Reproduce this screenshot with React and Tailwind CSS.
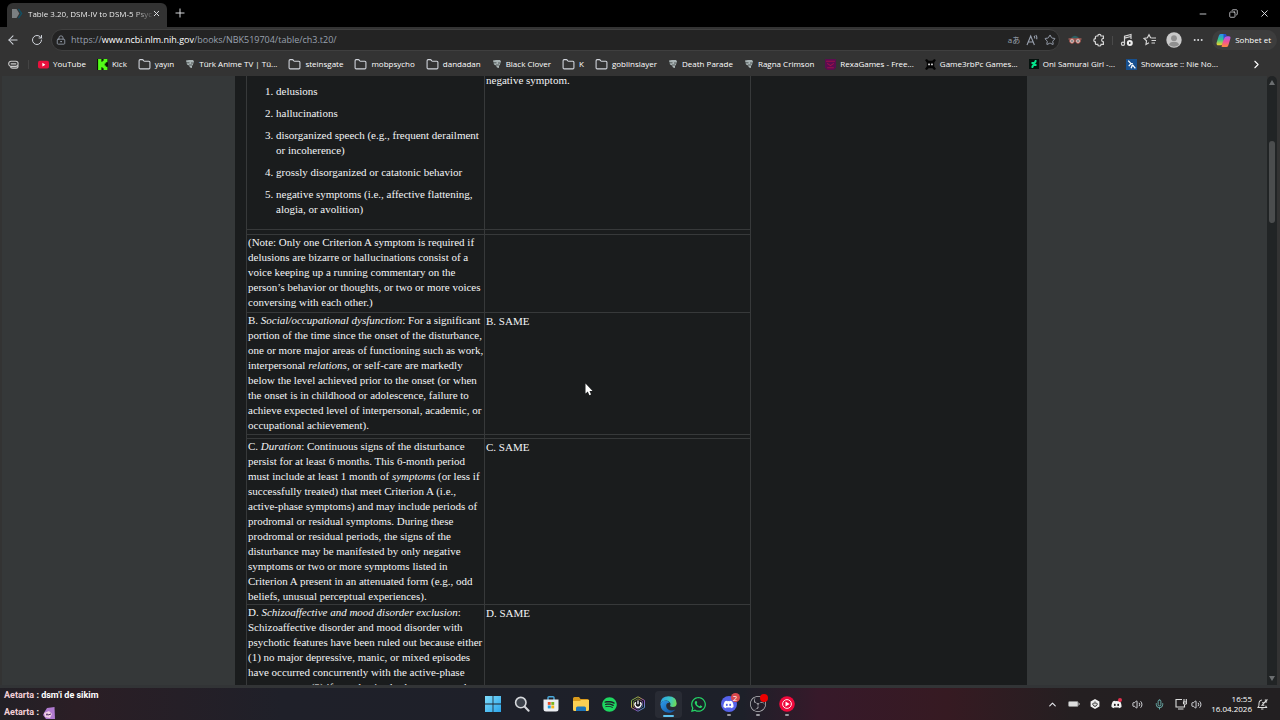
import React from 'react';
import { ArrowLeft, RotateCw, LockKeyhole, Plus, X, Minus, Copy, Star, ChevronRight, ChevronUp, Folder, Ellipsis, Volume2, Mic } from 'lucide-react';
import { FaDiscord, FaSpotify, FaWhatsapp } from 'react-icons/fa';
import { SiObsstudio } from 'react-icons/si';

// --- bookmark icons ---

function FolderIcon() {
  return <Folder size={13} strokeWidth={2} className="text-gray-300 shrink-0" />;
}

function YoutubeIcon() {
  return (
    <svg viewBox="0 0 12 12" className="w-[11px] h-[11px] shrink-0">
      <rect x="0" y="2" width="12" height="8.4" rx="2" fill="#e8103d" />
      <path d="M4.8 4.2 L8 6.2 L4.8 8.2 Z" fill="#fff" />
    </svg>
  );
}

function AnimeIcon() {
  return (
    <svg viewBox="0 0 10 10" className="w-[10px] h-[10px] shrink-0">
      <path d="M1 1.5 L4 1 H8 L9 2.5 L8 5.5 L7 7 V9 L5 8.5 L4 6.5 L2 5.5 Z" fill="#a9b4b5" />
      <path d="M1 3.8 H4.5 M6 4 H8.5 M4 6 L7 6" stroke="#3a3f40" strokeWidth="0.8" />
    </svg>
  );
}

function KickIcon() {
  return (
    <svg viewBox="0 0 10 10" className="w-[11px] h-[11px] shrink-0">
      <rect width="10" height="10" fill="#0b1606" />
      <path d="M1 0 H4 V2.5 H5 V1.5 H6 V0 H9.5 V3 H8 V4 H7 V6 H8 V7 H9.5 V10 H6 V8.5 H5 V7.5 H4 V10 H1 Z" fill="#53fc18" />
    </svg>
  );
}

function RexaIcon() {
  return (
    <svg viewBox="0 0 10 10" className="w-[11px] h-[11px] shrink-0">
      <path d="M0 0 H10 V8 L8 10 H2 L0 8 Z" fill="#5b0d4f" />
      <path d="M1 2 H9 M2 4 L5 6 L8 4 M2 8 H8" stroke="#a0104c" strokeWidth="1" fill="none" />
    </svg>
  );
}

function SkullIcon() {
  return (
    <svg viewBox="0 0 12 12" className="w-[11px] h-[11px] shrink-0">
      <path d="M0 1 L2 0 L4 2 H8 L10 0 L12 1 L10 4 V8 L12 11 L10 12 L8 10 H4 L2 12 L0 11 L2 8 V4 Z" fill="#050505" />
      <rect x="3.5" y="5" width="1.8" height="1.8" fill="#eee" />
      <rect x="6.7" y="5" width="1.8" height="1.8" fill="#eee" />
    </svg>
  );
}

function ArtIcon() {
  return (
    <svg viewBox="0 0 10 10" className="w-[10px] h-[10px] shrink-0">
      <rect width="10" height="10" fill="#06120e" />
      <path d="M7.5 1 V3 L6 5 H7.5 V7 H5 L4 9 H2.5 V7 L4 5 H2.5 V3 H5 L6 1 Z" fill="#05e58c" />
    </svg>
  );
}

function NieIcon() {
  return (
    <svg viewBox="0 0 10 10" className="w-[11px] h-[11px] shrink-0">
      <rect width="10" height="10" fill="#17508f" />
      <path d="M2 1.5 L4.5 4.2 H6.2 M4.5 4.2 L2.5 6.5 M5 6 L6.2 5.6 L8.5 8.5 M5.6 6.2 L4.6 8.5" stroke="#fff" strokeWidth="1.2" fill="none" />
    </svg>
  );
}

const bookmarks = [
  { label: 'YouTube', icon: <YoutubeIcon /> },
  { label: 'Kick', icon: <KickIcon /> },
  { label: 'yayın', icon: <FolderIcon /> },
  { label: 'Türk Anime TV | Tü...', icon: <AnimeIcon /> },
  { label: 'steinsgate', icon: <FolderIcon /> },
  { label: 'mobpsycho', icon: <FolderIcon /> },
  { label: 'dandadan', icon: <FolderIcon /> },
  { label: 'Black Clover', icon: <AnimeIcon /> },
  { label: 'K', icon: <FolderIcon /> },
  { label: 'goblinslayer', icon: <FolderIcon /> },
  { label: 'Death Parade', icon: <AnimeIcon /> },
  { label: 'Ragna Crimson', icon: <AnimeIcon /> },
  { label: 'RexaGames - Free...', icon: <RexaIcon /> },
  { label: 'Game3rbPc Games...', icon: <SkullIcon /> },
  { label: 'Oni Samurai Girl -...', icon: <ArtIcon /> },
  { label: 'Showcase :: Nie No...', icon: <NieIcon /> },
];

function TabBar() {
  return (
    <div className="h-[27px] bg-black flex items-end text-gray-200">
      <div className="ml-[7px] w-[160px] h-[24px] bg-[#333333] rounded-t-md flex items-center pl-[5px] pr-[6px] pb-[3px]">
        <svg viewBox="0 0 12 12" className="w-[11px] h-[11px] shrink-0">
          <path d="M0 1 H5 L8 6 L5 11 H0 Z" fill="#7b7f81" />
          <path d="M7 1 L10.5 6 L7 11" stroke="#124f63" strokeWidth="1.5" fill="none" />
        </svg>
        <span className="ml-[5px] flex-1 whitespace-nowrap text-[8px] leading-[12px] bg-linear-to-r from-white from-85% to-[#555555] bg-clip-text text-transparent">
          Table 3.20, DSM-IV to DSM-5 Psyc
        </span>
        <button aria-label="Close tab"><X size={9} strokeWidth={2.5} /></button>
      </div>
      <button aria-label="New tab" className="ml-[6px] mb-[7px]"><Plus size={14} strokeWidth={1.6} /></button>
      <div className="ml-auto flex items-center gap-[21px] mr-[10px] mb-[8px]">
        <button aria-label="Minimize"><Minus size={10} /></button>
        <button aria-label="Restore"><Copy size={9} className="-scale-x-100" /></button>
        <button aria-label="Close"><X size={11} /></button>
      </div>
    </div>
  );
}

function ToolbarIcons() {
  return (
    <>
      <button aria-label="Spy extension" className="ml-[8px]">
        <svg viewBox="0 0 14 14" className="w-[14px] h-[14px]">
          <path d="M2.5 5.5 Q7 0 11.5 5.5 Z" fill="#2c5f63" />
          <path d="M0.5 6 H13.5" stroke="#b5675e" strokeWidth="1.2" />
          <circle cx="4" cy="8" r="2.3" fill="#ddd" stroke="#b5574e" />
          <circle cx="10" cy="8" r="2.3" fill="#ddd" stroke="#b5574e" />
          <circle cx="4" cy="8" r="0.8" fill="#333" />
          <circle cx="10" cy="8" r="0.8" fill="#333" />
        </svg>
      </button>
      <button aria-label="Extensions" className="ml-[10px]">
        <svg viewBox="0 0 14 14" className="w-[14px] h-[14px]" fill="none" stroke="#d6d6d6" strokeWidth="1.2">
          <path d="M4.5 3 H5.8 A1.6 1.6 0 0 1 9 3 H11.4 V5.4 A1.7 1.7 0 1 0 11.4 8.8 V11.4 H9 A1.6 1.6 0 0 1 5.8 11.4 H4.4 Q3.4 11.4 3.4 10.4 V8.8 A1.6 1.6 0 0 1 3.4 5.6 V4 Q3.4 3 4.5 3 Z" />
        </svg>
      </button>
      <span className="ml-[6px] w-px h-[9px] bg-[#4a4a4a]"></span>
      <button aria-label="Media" className="ml-[7px]">
        <svg viewBox="0 0 14 14" className="w-[14px] h-[14px]" fill="none" stroke="#d6d6d6" strokeWidth="1.2">
          <path d="M4.5 10.5 V3.2 L11 1.5 V6 M4.5 5.2 L11 3.5" />
          <circle cx="3" cy="10.8" r="1.6" />
          <circle cx="9.8" cy="10" r="3" fill="#eee" stroke="none" />
          <path d="M9 8.7 L11.3 10 L9 11.3 Z" fill="#333" stroke="none" />
        </svg>
      </button>
      <button aria-label="Favorites" className="ml-[9px]">
        <svg viewBox="0 0 14 14" className="w-[14px] h-[14px]" fill="none" stroke="#d6d6d6" strokeWidth="1.2">
          <path d="M9 5 L7.6 4.8 L6 1.8 L4.4 4.8 L1 5.4 L3.5 7.8 L3 11.5 L6 9.8 M9 5 H13 M8.5 7.5 H13 M8.5 10 H12" />
        </svg>
      </button>
      <button aria-label="Profile" className="ml-[9px]">
        <svg viewBox="0 0 16 16" className="w-[16px] h-[16px]">
          <circle cx="8" cy="8" r="7.7" fill="#c9c9c9" />
          <circle cx="8" cy="6.2" r="2.9" fill="#8f8f8f" />
          <path d="M3 13 Q3.5 9.8 8 9.8 Q12.5 9.8 13 13 Q8 16.5 3 13 Z" fill="#8f8f8f" />
        </svg>
      </button>
      <button aria-label="More" className="ml-[10px] text-gray-200"><Ellipsis size={12} /></button>
      <button className="ml-[8px] mr-[3px] h-[20px] pl-[4px] pr-[6px] rounded-full bg-[#3d3d3d] flex items-center gap-[4px] text-[8px] leading-[12px] text-white whitespace-nowrap">
        <svg viewBox="0 0 16 16" className="w-[15px] h-[15px]">
          <defs>
            <linearGradient id="copilotA" x1="0" y1="0" x2="0" y2="1">
              <stop offset="0" stopColor="#2a8df2" />
              <stop offset="0.5" stopColor="#35c58a" />
              <stop offset="1" stopColor="#f6d42a" />
            </linearGradient>
            <linearGradient id="copilotB" x1="0" y1="0" x2="0" y2="1">
              <stop offset="0" stopColor="#a95cf0" />
              <stop offset="0.5" stopColor="#f0509a" />
              <stop offset="1" stopColor="#ff8a3a" />
            </linearGradient>
          </defs>
          <path d="M5 1 H9 Q10.5 1 10 3 L7.5 11 Q7 13 5 13 H2.5 Q0 13 0.7 10 L3 3 Q3.5 1 5 1 Z" fill="url(#copilotA)" />
          <path d="M11 3.5 H13.5 Q16 3.5 15.3 6 L13.2 13 Q12.5 15 11 15 H7 Q5.5 15 6 13.5 L8.6 5.5 Q9.2 3.5 11 3.5 Z" fill="url(#copilotB)" />
          <path d="M8 1 H10 Q11 1 11.5 3.5 Q9.6 3.4 9 5 L8 8 Z" fill="#2450d0" />
        </svg>
        Sohbet et
      </button>
    </>
  );
}

function AddressBar() {
  return (
    <div className="h-[26px] flex items-center text-gray-300">
      <button aria-label="Back" className="ml-[6px]"><ArrowLeft size={14} strokeWidth={1.8} /></button>
      <button aria-label="Refresh" className="ml-[11px]"><RotateCw size={12} strokeWidth={2} /></button>
      <div className="ml-[8px] flex-1 h-[22px] bg-[#232323] border border-[#3f3f3f] rounded-full flex items-center pl-[4px] pr-[3px] text-gray-400">
        <LockKeyhole size={10} />
        <div role="textbox" aria-label="Address" className="ml-[5px] text-[9px] leading-[14px] whitespace-nowrap">
          https://<span className="text-white">www.ncbi.nlm.nih.gov</span>/books/NBK519704/table/ch3.t20/
        </div>
        <div className="ml-auto flex items-center gap-[6px] text-[8px] leading-[12px]">
          <button aria-label="Translate">aあ</button>
          <button aria-label="Read aloud">
            <svg viewBox="0 0 12 12" className="w-[12px] h-[12px]" fill="none" stroke="currentColor" strokeWidth="1.1">
              <path d="M1 11 L4.7 2 L8.4 11 M2.2 8 H7.2 M8 2 Q9 3 8.6 4.5 M9.8 1 Q11.4 3 10.6 5.2" />
            </svg>
          </button>
          <button aria-label="Add favorite"><Star size={12} strokeWidth={2} /></button>
        </div>
      </div>
      <ToolbarIcons />
    </div>
  );
}

function BookmarksBar() {
  return (
    <nav className="h-[23px] flex items-center text-[8px] leading-[12px] text-white whitespace-nowrap pb-px">
      <svg viewBox="0 0 12 12" className="ml-[8px] w-[11px] h-[11px] shrink-0" fill="none" stroke="#ccc" strokeWidth="1.2">
        <rect x="0.8" y="2.5" width="10.2" height="5.5" rx="2.5" />
        <path d="M3 5.3 H9 M2.5 8 Q3 10 5 10 H9 Q11 10 11 7" />
      </svg>
      <span className="ml-[9px] w-px h-[9px] bg-[#444444]"></span>
      <div className="ml-[9px] flex items-center gap-[11px]">
        {bookmarks.map((b) => (
          <a href="#" key={b.label} className="flex items-center gap-[4px]">
            {b.icon}
            {b.label}
          </a>
        ))}
      </div>
      <button aria-label="More bookmarks" className="ml-auto mr-[17px]"><ChevronRight size={13} /></button>
    </nav>
  );
}

const cell = 'border border-[#37393a] align-top p-px whitespace-nowrap';
const tightCell = 'border border-[#37393a] align-top px-px py-0 whitespace-nowrap';
const thinCell = 'border border-[#37393a] p-0';

function CriteriaTable() {
  return (
    <table className="ml-[11px] -mt-[4px] w-[505px] table-fixed border-collapse">
      <colgroup>
        <col className="w-[238px]" />
        <col />
      </colgroup>
      <tbody>
        <tr className="h-[157px]">
          <td className={cell}>
            <ol className="list-decimal pl-[28px] mt-[10px] flex flex-col gap-[7px]">
              <li>delusions</li>
              <li>hallucinations</li>
              <li>disorganized speech (e.g., frequent derailment<br />or incoherence)</li>
              <li>grossly disorganized or catatonic behavior</li>
              <li>negative symptoms (i.e., affective flattening,<br />alogia, or avolition)</li>
            </ol>
          </td>
          <td className={tightCell}>negative symptom.</td>
        </tr>
        <tr className="h-[5px]"><td className={thinCell}></td><td className={thinCell}></td></tr>
        <tr className="h-[78px]">
          <td className={tightCell}>
            (Note: Only one Criterion A symptom is required if<br />
            delusions are bizarre or hallucinations consist of a<br />
            voice keeping up a running commentary on the<br />
            person’s behavior or thoughts, or two or more voices<br />
            conversing with each other.)
          </td>
          <td className={tightCell}></td>
        </tr>
        <tr className="h-[122px]">
          <td className={tightCell}>
            B. <i>Social/occupational dysfunction</i>: For a significant<br />
            portion of the time since the onset of the disturbance,<br />
            one or more major areas of functioning such as work,<br />
            interpersonal <i>relations</i>, or self-care are markedly<br />
            below the level achieved prior to the onset (or when<br />
            the onset is in childhood or adolescence, failure to<br />
            achieve expected level of interpersonal, academic, or<br />
            occupational achievement).
          </td>
          <td className={cell}>B. SAME</td>
        </tr>
        <tr className="h-[4px]"><td className={thinCell}></td><td className={thinCell}></td></tr>
        <tr className="h-[166px]">
          <td className={tightCell}>
            C. <i>Duration</i>: Continuous signs of the disturbance<br />
            persist for at least 6 months. This 6-month period<br />
            must include at least 1 month of <i>symptoms</i> (or less if<br />
            successfully treated) that meet Criterion A (i.e.,<br />
            active-phase symptoms) and may include periods of<br />
            prodromal or residual symptoms. During these<br />
            prodromal or residual periods, the signs of the<br />
            disturbance may be manifested by only negative<br />
            symptoms or two or more symptoms listed in<br />
            Criterion A present in an attenuated form (e.g., odd<br />
            beliefs, unusual perceptual experiences).
          </td>
          <td className={cell}>C. SAME</td>
        </tr>
        <tr>
          <td className={tightCell}>
            D. <i>Schizoaffective and mood disorder exclusion</i>:<br />
            Schizoaffective disorder and mood disorder with<br />
            psychotic features have been ruled out because either<br />
            (1) no major depressive, manic, or mixed episodes<br />
            have occurred concurrently with the active-phase<br />
            symptoms; or (2) if mood episodes have occurred
          </td>
          <td className={cell}>D. SAME</td>
        </tr>
      </tbody>
    </table>
  );
}

function Scrollbar() {
  return (
    <div className="w-[10px] mr-[3px] bg-[#212425] rounded-t-md flex flex-col items-center py-[4px]">
      <svg viewBox="0 0 6 5" className="w-[6px] h-[5px]"><path d="M3 0 L6 5 H0 Z" fill="#6b6e70" /></svg>
      <div className="mt-[56px] w-[6px] h-[82px] rounded-full bg-[#4b4d4e]"></div>
      <svg viewBox="0 0 6 5" className="mt-auto w-[6px] h-[5px]"><path d="M0 0 H6 L3 5 Z" fill="#6b6e70" /></svg>
    </div>
  );
}

// --- taskbar ---

function WindowsIcon() {
  return (
    <svg viewBox="0 0 16 16" className="w-[16px] h-[16px]">
      <defs>
        <linearGradient id="win" x1="0" y1="0" x2="1" y2="1">
          <stop offset="0" stopColor="#7fdcfb" />
          <stop offset="1" stopColor="#2ba5ea" />
        </linearGradient>
      </defs>
      <path d="M0 0 H7.6 V7.6 H0 Z M8.4 0 H16 V7.6 H8.4 Z M0 8.4 H7.6 V16 H0 Z M8.4 8.4 H16 V16 H8.4 Z" fill="url(#win)" />
    </svg>
  );
}

function SearchIcon() {
  return (
    <svg viewBox="0 0 16 16" className="w-[16px] h-[16px]" fill="none">
      <circle cx="6.8" cy="6.6" r="5.2" stroke="#d5d7db" strokeWidth="1.6" fill="#3d424b" />
      <path d="M10.8 10.8 L14.6 14.8" stroke="#d5d7db" strokeWidth="2" strokeLinecap="round" />
    </svg>
  );
}

function StoreIcon() {
  return (
    <svg viewBox="0 0 16 16" className="w-[16px] h-[16px]">
      <path d="M5 4 V1.5 Q5 0.7 6 0.7 H10 Q11 0.7 11 1.5 V4" fill="none" stroke="#4aa9dc" strokeWidth="1.4" />
      <path d="M0.5 3.5 H15.5 V13 Q15.5 15.5 13 15.5 H3 Q0.5 15.5 0.5 13 Z" fill="#eceef2" />
      <rect x="4.8" y="6" width="2.9" height="2.9" fill="#e8502c" />
      <rect x="8.3" y="6" width="2.9" height="2.9" fill="#7bb41f" />
      <rect x="4.8" y="9.5" width="2.9" height="2.9" fill="#1f9fe0" />
      <rect x="8.3" y="9.5" width="2.9" height="2.9" fill="#f5b416" />
    </svg>
  );
}

function ExplorerIcon() {
  return (
    <svg viewBox="0 0 16 16" className="w-[16px] h-[16px]">
      <path d="M0 2.5 Q0 1 1.5 1 H6 L7.5 3 H14.5 Q16 3 16 4.5 V8 H0 Z" fill="#d99a1c" />
      <path d="M0 5 H7 L8 4 H16 V13.5 Q16 15 14.5 15 H1.5 Q0 15 0 13.5 Z" fill="#fcd053" />
      <path d="M3 15 V12 Q3 10.5 4.5 10.5 H11.5 Q13 10.5 13 12 V15 Z" fill="#1d74b8" />
    </svg>
  );
}

function PowerHexIcon() {
  return (
    <svg viewBox="0 0 16 16" className="w-[16px] h-[16px]" fill="none">
      <defs>
        <linearGradient id="hex" x1="0" y1="0" x2="1" y2="1">
          <stop offset="0" stopColor="#58b05a" />
          <stop offset="0.35" stopColor="#c0a84a" />
          <stop offset="0.6" stopColor="#9a4fc0" />
          <stop offset="1" stopColor="#38b0c8" />
        </linearGradient>
      </defs>
      <path d="M8 0.8 L14.5 4.4 V11.6 L8 15.2 L1.5 11.6 V4.4 Z" fill="#111319" stroke="url(#hex)" />
      <path d="M8 2.8 L12.6 5.4 V10.6 L8 13.2 L3.4 10.6 V5.4 Z" stroke="url(#hex)" strokeWidth="0.7" />
      <path d="M5.8 6.3 A3 3 0 1 0 10.2 6.3 M8 4.5 V8.3" stroke="#fff" strokeWidth="1.3" />
    </svg>
  );
}

function EdgeIcon() {
  return (
    <svg viewBox="0 0 16 16" className="relative w-[17px] h-[17px]">
      <defs>
        <linearGradient id="edgeTop" x1="0" y1="0.3" x2="1" y2="0.5">
          <stop offset="0" stopColor="#2b9fe6" />
          <stop offset="0.6" stopColor="#3cc6c0" />
          <stop offset="1" stopColor="#6fdc56" />
        </linearGradient>
        <linearGradient id="edgeLow" x1="0" y1="0" x2="1" y2="1">
          <stop offset="0" stopColor="#2f9ce8" />
          <stop offset="1" stopColor="#0e4f9e" />
        </linearGradient>
      </defs>
      <path d="M0.3 7 Q1 0.3 8 0.3 Q15.7 0.6 15.7 7 Q15.5 10.3 12 10.4 Q9 10.3 9.6 8.8 Q10.4 7.6 9.4 6 Q8 4 5.5 4.2 Q2 4.4 0.3 7 Z" fill="url(#edgeTop)" />
      <path d="M0.3 7.5 Q2 4.3 5.5 4.3 Q8 4.3 9 6 Q5.6 6.4 5.8 9.4 Q6.4 13.5 11 13.6 Q13 13.6 14.4 12.6 Q12 15.8 8 15.8 Q1 15.4 0.3 7.5 Z" fill="url(#edgeLow)" />
    </svg>
  );
}

function YtMusicIcon() {
  return (
    <svg viewBox="0 0 16 16" className="w-[16px] h-[16px]">
      <circle cx="8" cy="8" r="7.8" fill="#f0093c" />
      <circle cx="8" cy="8" r="4.4" fill="none" stroke="#fff" strokeWidth="0.9" />
      <path d="M6.5 5.6 L10.6 8 L6.5 10.4 Z" fill="#fff" />
    </svg>
  );
}

function RunningDot() {
  return <span className="absolute left-[6px] -bottom-[4px] w-[4px] h-[2px] rounded-full bg-[#9a9aa0]"></span>;
}

function Chat() {
  return (
    <div className="flex-1 pl-[4px] pr-[8px] font-['Roboto',sans-serif] font-bold text-[9px] leading-[17px] text-white whitespace-nowrap">
      <p><span className="text-[#f3cfd8]">Aetarta</span> : dsm'i de sikim</p>
      <p className="flex items-center">
        <span className="text-[#f3cfd8]">Aetarta</span>&nbsp;:
        <svg viewBox="0 0 12 12" className="ml-[4px] w-[12px] h-[12px]">
          <path d="M4 1 L11.5 0 L12 12 H3 L0 8 L1.5 5 Z" fill="#b07ad0" />
          <path d="M1 6 L6 4 L9 7 L7 11 L2 10 Z" fill="#f0cfe4" />
          <circle cx="4" cy="7.5" r="0.9" fill="#4a2a60" />
          <path d="M5 8 L8 7" stroke="#4a2a60" />
        </svg>
      </p>
    </div>
  );
}

function TaskIcons() {
  return (
    <div className="w-[311px] flex items-center justify-between">
      <button aria-label="Start"><WindowsIcon /></button>
      <button aria-label="Search"><SearchIcon /></button>
      <button aria-label="Store"><StoreIcon /></button>
      <button aria-label="Explorer"><ExplorerIcon /></button>
      <button aria-label="Spotify"><FaSpotify size={15} color="#1ed760" /></button>
      <button aria-label="Lighting"><PowerHexIcon /></button>
      <button aria-label="Edge" className="relative">
        <span className="absolute -inset-[5px] rounded-sm bg-white/5"></span>
        <EdgeIcon />
        <span className="absolute left-[3px] -bottom-[4px] w-[11px] h-[2px] rounded-full bg-[#5fc3f0]"></span>
      </button>
      <button aria-label="WhatsApp"><FaWhatsapp size={17} color="#25d366" /></button>
      <button aria-label="Discord" className="relative">
        <span className="w-[16px] h-[16px] rounded-full bg-[#5562ea] flex items-center justify-center"><FaDiscord size={11} color="#fff" /></span>
        <span className="absolute left-[10px] -top-[3px] w-[9px] h-[9px] rounded-full bg-[#d9484c] text-white text-[8px] leading-[9px] text-center">2</span>
        <RunningDot />
      </button>
      <button aria-label="OBS" className="relative">
        <SiObsstudio size={16} color="#b9b9bd" />
        <span className="absolute left-[10px] -top-[2px] w-[8px] h-[8px] rounded-full bg-[#ee0000]"></span>
        <RunningDot />
      </button>
      <button aria-label="YouTube Music" className="relative"><YtMusicIcon /><RunningDot /></button>
    </div>
  );
}

function Tray() {
  return (
    <div className="flex-1 flex items-center justify-end pr-[12px] text-gray-200">
      <button aria-label="Hidden icons"><ChevronUp size={11} strokeWidth={2.5} /></button>
      <svg viewBox="0 0 12 8" className="ml-[10px] w-[12px] h-[8px]">
        <rect x="0.5" y="1.5" width="9.6" height="5" rx="1.2" fill="#ddd" stroke="#8a8a8a" />
        <path d="M11.2 3 V5" stroke="#aaa" strokeWidth="1" />
      </svg>
      <svg viewBox="0 0 10 10" className="ml-[10px] w-[10px] h-[10px]">
        <path d="M5 0 L9.4 2.5 V7.5 L5 10 L0.6 7.5 V2.5 Z" fill="#f0f0f0" />
        <path d="M3.4 3.8 A2.1 2.1 0 1 0 6.6 3.8 M5 2.5 V5.2" stroke="#222" strokeWidth="1" fill="none" />
      </svg>
      <span className="relative ml-[11px]">
        <FaDiscord size={11} color="#f3f3f3" />
        <span className="absolute left-[7px] -top-[1px] w-[4px] h-[4px] rounded-full bg-[#e0304c]"></span>
      </span>
      <Volume2 size={11} className="ml-[10px]" />
      <Mic size={11} className="ml-[11px] text-[#6fb7b4]" />
      <svg viewBox="0 0 12 12" className="ml-[10px] w-[12px] h-[12px]" fill="none" stroke="#ddd" strokeWidth="1.1">
        <path d="M7 1.5 H1 V9 H9.5 V7 M3 11 H8.5 M9 1 V4 M11.3 1 V4 M8.5 4 H11.8 V5.5 Q10 7 8.5 5.5 Z" />
      </svg>
      <Volume2 size={11} className="ml-[4px]" />
      <div className="ml-[9px] text-right text-[8px] leading-[10px] text-white">
        <p>16:55</p>
        <p>16.04.2026</p>
      </div>
      <svg viewBox="0 0 12 12" className="ml-[5px] w-[11px] h-[11px]" fill="none" stroke="#ddd" strokeWidth="1.1">
        <path d="M5.5 1.2 Q2.2 1.6 2.2 5 L2 7.5 L1 9.3 H10.5 L9.4 7.4 M4.5 10.8 H7 M5.5 4.2 H8 L5.5 6.8 H8 M8.5 1 H11 L8.5 3.4 H11" />
      </svg>
    </div>
  );
}

export default function App() {
  return (
    <div className="relative h-screen flex flex-col overflow-hidden bg-[#333333] font-['Open_Sans','Noto_Sans_CJK_JP',sans-serif]">
      <TabBar />
      <AddressBar />
      <BookmarksBar />
      <div className="flex-1 min-h-0 flex">
        <div className="flex-1 ml-[2px] pr-[7px] flex justify-center bg-[#353839] overflow-hidden">
          <main className="w-[792px] bg-[#1a1c1d] text-gray-100 font-['Liberation_Serif',serif] text-[11px] leading-[15px]">
            <CriteriaTable />
          </main>
        </div>
        <Scrollbar />
      </div>
      <footer className="h-[35px] border-t-3 border-[#323436] flex items-center bg-[linear-gradient(to_right,#222026,#2b1e25_6%,#1f2029_22%,#1d2029_58%,#37192a_64%,#361a22_74%,#241f21_84%,#221f21)]">
        <Chat />
        <TaskIcons />
        <Tray />
      </footer>
      {/* mouse pointer */}
      <svg viewBox="0 0 8 13" className="absolute left-[585px] top-[383px] w-[8px] h-[13px]">
        <path d="M0.5 0.5 V10.5 L2.8 8.5 L4.4 12.2 L6 11.5 L4.5 8 H7.5 Z" fill="#fff" />
      </svg>
    </div>
  );
}
